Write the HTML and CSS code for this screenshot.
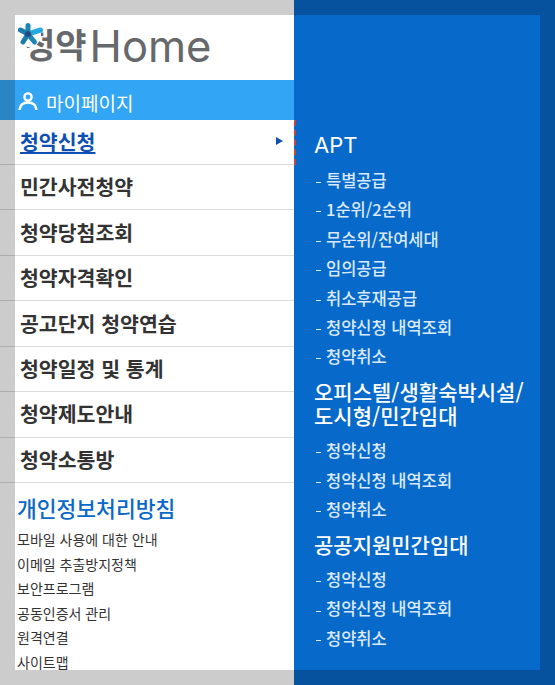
FILE: index.html
```html
<!DOCTYPE html>
<html lang="ko">
	<head>
		<meta charset="utf-8">
		<title>청약Home</title>
		<link rel="stylesheet" href="styles.css">
	</head>
	<body>
		<div class="menu">
			<div class="side">
				<div class="logo">
					<span class="logo-ko">청약</span><span class="logo-en">Home</span>
					<svg class="star" width="26" height="25" viewBox="0 0 26 25">
						<circle cx="11" cy="12" r="12" fill="#fff"/>
						<g stroke-linecap="round" stroke-width="5" fill="none">
							<path d="M10 11 V2.500" stroke="#1c86b4"/>
							<path d="M10 11 L2.500 7" stroke="#1b7fae"/>
							<path d="M10 11 L22.500 7" stroke="#27aadd"/>
							<path d="M10 11 L5 19" stroke="#1b7fae"/>
							<path d="M10 11 L16.500 19" stroke="#1c86b4"/>
						</g>
						<circle cx="10" cy="11" r="3" fill="#264a80"/>
					</svg>
				</div>
				<div class="mypage">
					<svg width="20" height="20" viewBox="0 0 20 20" fill="none" stroke="#fff" stroke-width="2.400">
						<circle cx="10" cy="6" r="3.600"/>
						<path d="M1.500 19 C2 13.500 5.500 11.500 10 11.500 C14.500 11.500 18 13.500 18.500 19"/>
					</svg>
					<span>마이페이지</span>
				</div>
				<ul class="main-list">
					<li class="active"><a>청약신청</a><i class="arrow"></i></li>
					<li><a>민간사전청약</a></li>
					<li><a>청약당첨조회</a></li>
					<li><a>청약자격확인</a></li>
					<li><a>공고단지 청약연습</a></li>
					<li><a>청약일정 및 통계</a></li>
					<li><a>청약제도안내</a></li>
					<li><a>청약소통방</a></li>
				</ul>
				<div class="extra">
					<div class="privacy">개인정보처리방침</div>
					<ul class="extra-list">
						<li>모바일 사용에 대한 안내</li>
						<li>이메일 추출방지정책</li>
						<li>보안프로그램</li>
						<li>공동인증서 관리</li>
						<li>원격연결</li>
						<li>사이트맵</li>
					</ul>
				</div>
			</div>
			<div class="sub">
				<h3 class="latin">APT</h3>
				<ul>
					<li>특별공급</li>
					<li>1순위/2순위</li>
					<li>무순위/잔여세대</li>
					<li>임의공급</li>
					<li>취소후재공급</li>
					<li>청약신청 내역조회</li>
					<li>청약취소</li>
				</ul>
				<h3>오피스텔/생활숙박시설/<br>도시형/민간임대</h3>
				<ul>
					<li>청약신청</li>
					<li>청약신청 내역조회</li>
					<li>청약취소</li>
				</ul>
				<h3>공공지원민간임대</h3>
				<ul>
					<li>청약신청</li>
					<li>청약신청 내역조회</li>
					<li>청약취소</li>
				</ul>
			</div>
		</div>
	</body>
</html>
```

FILE: styles.css
```css
* {
    box-sizing: border-box;
}

html, body {
    margin: 0;
    height: 100%;
}

body {
    background: linear-gradient(to right, #cccccc 294px, #06529f 294px);
    font-family: "Noto Sans CJK KR", "Noto Sans", sans-serif;
    overflow: hidden;
}

ul {
    list-style: none;
    margin: 0;
    padding: 0;
}

.menu {
    display: flex;
    width: 525px;
    height: 655px;
    margin: 15px 0 0 15px;
}

.side {
    width: 279px;
    background: #ffffff;
}

.logo {
    position: relative;
    display: flex;
    align-items: flex-start;
    height: 65px;
    padding-left: 9px;
    color: #66686b;
    white-space: nowrap;
}

.star {
    position: absolute;
    left: 3px;
    top: 8px;
}

.logo-ko {
    font-size: 34px;
    font-weight: 700;
    line-height: 58px;
}

.logo-en {
    margin-left: 3px;
    font-family: "Inter", sans-serif;
    font-size: 43.5px;
    font-weight: 400;
    line-height: 62px;
}

.mypage {
    display: flex;
    align-items: center;
    gap: 8px;
    height: 40px;
    padding-left: 3px;
    background: #33a5f5;
    color: #ffffff;
    font-size: 19px;
    box-shadow: -15px 0 0 #2a85c5;
}

.mypage svg {
    margin-top: 2px;
}

.mypage span {
    padding-top: 5px;
}

.main-list li {
    position: relative;
    display: flex;
    align-items: center;
    justify-content: space-between;
    height: 45.45px;
    padding: 0 11px 2px 5px;
    border-bottom: 1px solid #dcdcdc;
    font-size: 20.5px;
    font-weight: 700;
    color: #333333;
}

.main-list li::before {
    content: "";
    position: absolute;
    left: -15px;
    bottom: -1px;
    width: 15px;
    height: 1px;
    background: #adadad;
}

.main-list li.active {
    height: 45px;
    color: #0e4fb4;
    text-decoration: underline;
}

.arrow {
    width: 0;
    height: 0;
    border-left: 7px solid #0e4fb4;
    border-top: 4px solid transparent;
    border-bottom: 4px solid transparent;
}

.extra {
    height: 187px;
    padding: 7px 0 0 2px;
    overflow: hidden;
}

.privacy {
    height: 37px;
    font-size: 21.5px;
    font-weight: 500;
    color: #0a68c8;
    line-height: 36px;
}

.extra-list li {
    height: 24.5px;
    font-size: 14px;
    line-height: 24px;
    color: #333333;
}

.sub {
    position: relative;
    width: 246px;
    background: #0769ca;
    padding: 118px 0 0 20px;
    color: #ffffff;
}

.sub::before {
    content: "";
    position: absolute;
    left: 0;
    top: 105px;
    height: 45px;
    border-left: 2px dashed #c8443c;
}

.sub h3 {
    margin: 0;
    font-size: 21px;
    font-weight: 500;
    line-height: 24px;
}

.sub h3.latin {
    font-family: "Inter", sans-serif;
    font-size: 22px;
    font-weight: 400;
}

.sub ul {
    padding: 8px 0 8.6px;
}

.sub li {
    height: 29.4px;
    font-size: 16.5px;
    font-weight: 500;
    line-height: 30px;
    color: #dbe9fa;
}

.sub li::before {
    content: "";
    display: inline-block;
    width: 5px;
    height: 1px;
    margin: 0 5.5px 0 1.5px;
    background: #dbe9fa;
    vertical-align: middle;
}
```
